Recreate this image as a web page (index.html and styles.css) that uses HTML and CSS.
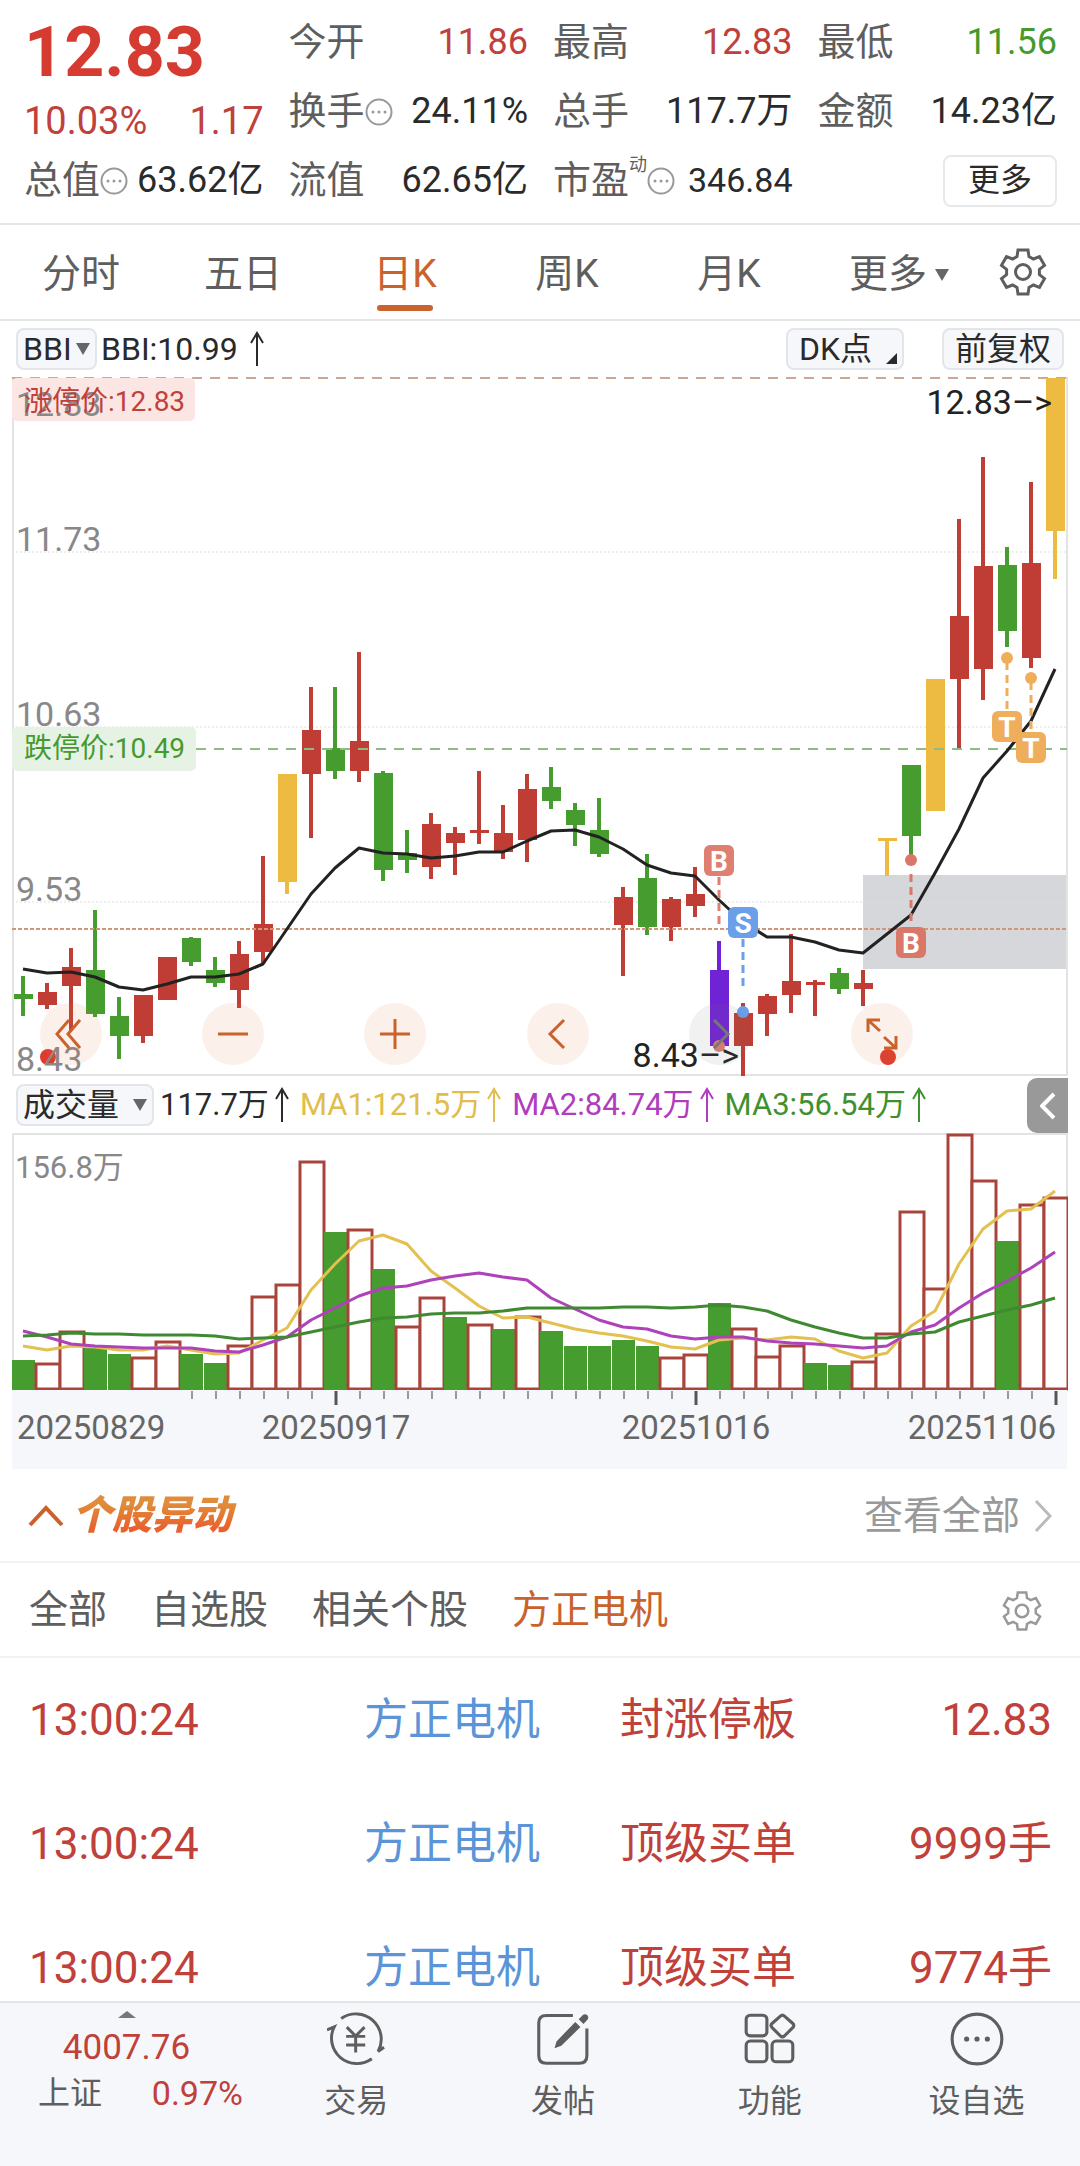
FILE: index.html
```
<!DOCTYPE html>
<html lang="zh-CN">

<head>
    <meta charset="utf-8">
    <meta name="viewport" content="width=device-width, initial-scale=1">
    <title>方正电机 - 日K</title>
    <link rel="stylesheet" href="styles.css">
</head>

<body>
    <svg class="defs" aria-hidden="true">
        <symbol id="gear" viewBox="-25 -25 50 50">
            <path d="M-6-15.5L-5-22H5L6-15.5L10.4-13L16.5-15.3L21.5-6.7L16.4-2.6V2.6L21.5 6.7L16.5 15.3L10.4 13L6 15.5L5 22H-5L-6 15.5L-10.4 13L-16.5 15.3L-21.5 6.7L-16.4 2.6V-2.6L-21.5-6.7L-16.5-15.3L-10.4-13Z" />
            <circle r="7.5" />
        </symbol>
        <symbol id="info" viewBox="0 0 28 28">
            <circle cx="14" cy="14" r="12.5" />
            <path d="M8 14h0M14 14h0M20 14h0" stroke-width="3" stroke-linecap="round" />
        </symbol>
    </svg>

    <main class="content">
        <header class="quote">
            <div class="price">
                <strong class="price-now">12.83</strong>
                <div class="price-change"><span>10.03%</span><span>1.17</span></div>
            </div>
            <div class="cell"><span class="label">今开</span><span class="value up">11.86</span></div>
            <div class="cell"><span class="label">最高</span><span class="value up">12.83</span></div>
            <div class="cell"><span class="label">最低</span><span class="value down">11.56</span></div>
            <div class="cell"><span class="label">换手<svg class="info"><use href="#info" /></svg></span><span class="value">24.11%</span></div>
            <div class="cell"><span class="label">总手</span><span class="value">117.7万</span></div>
            <div class="cell"><span class="label">金额</span><span class="value">14.23亿</span></div>
            <div class="cell"><span class="label">总值<svg class="info"><use href="#info" /></svg></span><span class="value">63.62亿</span></div>
            <div class="cell"><span class="label">流值</span><span class="value">62.65亿</span></div>
            <div class="cell"><span class="label">市盈<sup class="dynamic">动</sup><svg class="info"><use href="#info" /></svg></span><span class="value small">346.84</span></div>
            <div class="cell last"><button class="more">更多</button></div>
        </header>

        <nav class="periods">
            <button class="period">分时</button>
            <button class="period">五日</button>
            <button class="period active">日K</button>
            <button class="period">周K</button>
            <button class="period">月K</button>
            <button class="period menu">更多<i class="triangle"></i></button>
            <button class="settings" aria-label="设置"><svg class="gear"><use href="#gear" /></svg></button>
        </nav>

        <section class="charts">
            <div class="bar">
                <label class="picker"><select class="select" aria-label="主图指标"><option>BBI</option></select><i class="triangle"></i></label>
                <span class="reading">BBI:10.99</span>
                <svg class="arrow" viewBox="0 0 14 36"><path d="M7 35V3M1 12L7 2L13 12" /></svg>
                <label class="picker dk"><select class="select" aria-label="DK点"><option>DK点</option></select><i class="corner"></i></label>
                <button class="adjust">前复权</button>
            </div>

            <div class="kline">
                <svg class="plot" id="kline" viewBox="0 0 1056 700" role="img" aria-label="日K线"></svg>
                <div class="tools">
                    <button class="tool" aria-label="最早"><svg viewBox="0 0 32 32"><path d="M14 2L2 16L14 30M25 2L13 16L25 30" /></svg></button>
                    <button class="tool" aria-label="缩小"><svg viewBox="0 0 32 32"><path d="M1 16H31" /></svg></button>
                    <button class="tool" aria-label="放大"><svg viewBox="0 0 32 32"><path d="M1 16H31M16 1V31" /></svg></button>
                    <button class="tool" aria-label="向前"><svg viewBox="0 0 32 32"><path d="M22 2L8 16L22 30" /></svg></button>
                    <button class="tool off" aria-label="向后" disabled><svg viewBox="0 0 32 32"><path d="M10 2L24 16L10 30" /></svg></button>
                    <button class="tool" aria-label="全屏"><svg viewBox="0 0 32 32"><path d="M2 14V2H14M2 2L14 13M30 18V30H18M30 30L18 19" /></svg></button>
                </div>
            </div>

            <div class="bar volume-bar">
                <label class="picker wide"><select class="select" aria-label="副图指标"><option>成交量</option></select><i class="triangle"></i></label>
                <span class="ma">117.7万<svg class="arrow" viewBox="0 0 14 36"><path d="M7 35V3M1 12L7 2L13 12" /></svg></span>
                <span class="ma ma1">MA1:121.5万<svg class="arrow" viewBox="0 0 14 36"><path d="M7 35V3M1 12L7 2L13 12" /></svg></span>
                <span class="ma ma2">MA2:84.74万<svg class="arrow" viewBox="0 0 14 36"><path d="M7 35V3M1 12L7 2L13 12" /></svg></span>
                <span class="ma ma3">MA3:56.54万<svg class="arrow" viewBox="0 0 14 36"><path d="M7 35V3M1 12L7 2L13 12" /></svg></span>
                <button class="pull" aria-label="展开"><svg viewBox="0 0 16 28"><path d="M14 2L2 14L14 26" /></svg></button>
            </div>

            <svg class="plot" id="volume" viewBox="0 0 1056 336" role="img" aria-label="成交量"></svg>
        </section>

        <section class="moves">
            <div class="moves-head">
                <button class="fold" aria-label="收起"><svg viewBox="0 0 36 22"><path d="M2 20L18 3L34 20" /></svg></button>
                <h2 class="moves-title">个股异动</h2>
                <a class="all" href="#">查看全部<svg viewBox="0 0 18 32"><path d="M2 1L16 16L2 31" /></svg></a>
            </div>
            <div class="filters">
                <button class="filter">全部</button>
                <button class="filter">自选股</button>
                <button class="filter">相关个股</button>
                <button class="filter active">方正电机</button>
                <button class="settings" aria-label="异动设置"><svg class="gear"><use href="#gear" /></svg></button>
            </div>
            <table class="list">
                <tbody>
                    <tr><td>13:00:24</td><td><a href="#">方正电机</a></td><td>封涨停板</td><td>12.83</td></tr>
                    <tr><td>13:00:24</td><td><a href="#">方正电机</a></td><td>顶级买单</td><td>9999手</td></tr>
                    <tr><td>13:00:24</td><td><a href="#">方正电机</a></td><td>顶级买单</td><td>9774手</td></tr>
                </tbody>
            </table>
        </section>
    </main>

    <nav class="bottom">
        <button class="index">
            <i class="triangle"></i>
            <span class="index-value">4007.76</span>
            <span class="index-row"><span>上证</span><span class="index-pct">0.97%</span></span>
        </button>
        <button class="action">
            <svg viewBox="50 42 176 176"><g stroke-width="9"><path d="M93 68A77 77 0 0 1 205 168L223 155M186 190A77 77 0 0 1 72 93L50 102M110 94L137 121L164 94M137 121V171M108 122H166M108 148H166" /></g></svg>
            交易
        </button>
        <button class="action">
            <svg viewBox="672 44 170 170"><g stroke-width="9"><path d="M786 60H708Q686 60 686 82V178Q686 200 708 200H805Q827 200 827 178V98" /></g><path class="solid" d="M732 156L738 136L793 79L808 94L752 149ZM803 71L816 58Q823 54 829 60Q833 66 829 72L817 85Z" /></svg>
            发帖
        </button>
        <button class="action">
            <svg viewBox="-4 -4 56 56"><rect x="1" y="1" width="20" height="20" rx="4" /><rect x="1" y="26" width="20" height="20" rx="4" /><rect x="26" y="26" width="20" height="20" rx="4" /><path d="M34 2Q36 0 38 2L46 9Q48 11 46 13L38 21Q36 23 34 21L26 13Q24 11 26 9Z" /></svg>
            功能
        </button>
        <button class="action">
            <svg viewBox="-1 -1 56 56"><circle cx="27" cy="27" r="24" /><path d="M17 27h0M27 27h0M37 27h0" stroke-width="5" stroke-linecap="round" /></svg>
            设自选
        </button>
    </nav>

    <script src="chart.js"></script>
</body>

</html>
```

FILE: styles.css
```
* {
    box-sizing: border-box;
}

body {
    margin: 0;
    height: 100vh;
    display: flex;
    flex-direction: column;
    background-color: #fff;
    color: #2a2a2a;
    font-family: Roboto, "Noto Sans CJK SC", sans-serif;
    line-height: 1.2;
}

button,
select {
    margin: 0;
    padding: 0;
    border: none;
    background: none;
    color: inherit;
    font: inherit;
    cursor: pointer;
}

a {
    color: inherit;
    text-decoration: none;
}

svg {
    display: block;
    fill: none;
    stroke: currentColor;
    stroke-width: 3;
}

.defs {
    position: absolute;
    width: 0;
    height: 0;
}

.content {
    flex: 1;
    min-height: 0;
    overflow-x: hidden;
    overflow-y: auto;
    scrollbar-width: none;
}

/* Quote header */
.quote {
    display: grid;
    grid-template-columns: repeat(4, minmax(0, 1fr));
    grid-auto-rows: 69px;
    column-gap: 25px;
    padding: 8px 23px 8px 24px;
    border-bottom: 2px solid #e6e6e8;
}

.price {
    grid-row: span 2;
    color: #d63b31;
}

.price-now {
    display: block;
    font-size: 70px;
    font-weight: 700;
    line-height: 88px;
}

.price-change {
    display: flex;
    justify-content: space-between;
    color: #c0403a;
    font-size: 38px;
    line-height: 50px;
}

.cell {
    display: flex;
    align-items: center;
    justify-content: space-between;
    white-space: nowrap;
}

.cell.last {
    justify-content: flex-end;
}

.label {
    display: flex;
    align-items: center;
    color: #5e5e5e;
    font-size: 38px;
}

.value {
    font-size: 36px;
}

.value.small {
    font-size: 34px;
}

.up {
    color: #c0403a;
}

.down {
    color: #459a2e;
}

.info {
    width: 28px;
    height: 28px;
    color: #999;
    stroke-width: 2;
}

.dynamic {
    align-self: flex-start;
    font-size: 18px;
    line-height: 14px;
}

.more {
    width: 114px;
    height: 52px;
    border: 2px solid #e6e8ec;
    border-radius: 8px;
    font-size: 32px;
}

/* Period tabs */
.periods {
    display: grid;
    grid-template-columns: repeat(6, 3fr) 2fr;
    height: 96px;
    border-bottom: 2px solid #e6e6e8;
    color: #5e5e5e;
    font-size: 39px;
}

.period {
    display: flex;
    align-items: center;
    justify-content: center;
    padding-top: 5px;
    position: relative;
}

.period.menu {
    padding-left: 16px;
}

.period.active {
    color: #c9622d;
}

.period.active::after {
    content: "";
    position: absolute;
    bottom: 8px;
    width: 56px;
    height: 6px;
    border-radius: 3px;
    background-color: #c9622d;
}

.period .triangle {
    margin-left: 8px;
}

.triangle {
    border: 7px solid transparent;
    border-top: 12px solid #666;
    border-bottom: none;
}

.periods .settings {
    padding-right: 6px;
}

.gear {
    width: 50px;
    height: 50px;
    margin: auto;
}

/* Indicator bars */
.charts {
    padding: 0 12px;
}

.bar {
    display: flex;
    align-items: center;
    gap: 4px;
    height: 56px;
    padding: 0 4px;
    font-size: 32px;
    white-space: nowrap;
}

.picker,
.adjust {
    display: flex;
    align-items: center;
    justify-content: space-between;
    height: 42px;
    padding: 0 5px;
    border: 2px solid #e2e5ea;
    border-radius: 8px;
    background-color: #f6f7fa;
}

.picker {
    gap: 4px;
}

.select {
    appearance: none;
    line-height: 38px;
}

.dk {
    width: 118px;
    margin-left: auto;
    margin-right: 34px;
    padding-left: 11px;
}

.corner {
    align-self: flex-end;
    margin-bottom: 4px;
    border-left: 11px solid transparent;
    border-bottom: 11px solid #2a2a2a;
}

.adjust {
    padding: 0 11px;
}

.arrow {
    width: 14px;
    height: 36px;
    margin-left: 8px;
    stroke-width: 2;
}

.kline {
    position: relative;
}

.plot {
    width: 100%;
    height: auto;
}

.plot text {
    font-size: 34px;
    fill: #888;
    stroke: none;
}

.plot .dark {
    fill: #222;
}

.plot .mid {
    font-size: 31px;
}

.plot .date {
    font-size: 33px;
    fill: #666;
}

.plot .tag {
    font-size: 28px;
}

.plot .badge {
    font-size: 28px;
    font-weight: 700;
    fill: #fff;
}

.tools {
    position: absolute;
    left: 28px;
    right: 155px;
    bottom: 12px;
    display: flex;
    justify-content: space-between;
}

.tool {
    width: 62px;
    height: 62px;
    border-radius: 50%;
    background-color: rgba(230, 120, 70, 0.11);
    color: #c9622d;
}

.tool svg {
    width: 32px;
    height: 32px;
    margin: auto;
}

.tool.off {
    background-color: rgba(120, 120, 120, 0.1);
    color: #777;
}

.volume-bar {
    position: relative;
    gap: 6px;
    font-size: 31px;
}

.wide {
    width: 138px;
    font-size: 32px;
}

.ma {
    display: flex;
    align-items: center;
    margin-right: 5px;
}

.ma .arrow {
    margin-left: 6px;
}

.ma1 {
    color: #e0bd4c;
}

.ma2 {
    color: #b03cc0;
}

.ma3 {
    color: #3f9130;
}

.pull {
    position: absolute;
    right: 0;
    top: 1px;
    width: 41px;
    height: 55px;
    border-radius: 10px 0 0 10px;
    background-color: #999;
    color: #fff;
}

.pull svg {
    width: 16px;
    height: 28px;
    margin: auto;
    stroke-width: 4;
}

/* Stock movements */
.moves-head {
    display: flex;
    align-items: center;
    height: 94px;
    padding: 2px 28px 0;
    border-bottom: 2px solid #f2f2f4;
}

.fold {
    color: #c9622d;
}

.fold svg {
    width: 36px;
    height: 22px;
    stroke-width: 4;
}

.moves-title {
    margin: 0 0 0 8px;
    padding-right: 6px;
    background: linear-gradient(#e08c3a 25%, #e9622e 75%);
    background-clip: text;
    color: transparent;
    font-size: 40px;
    font-style: italic;
    font-weight: 900;
}

.all {
    display: flex;
    align-items: center;
    gap: 14px;
    margin-left: auto;
    color: #999;
    font-size: 39px;
}

.all svg {
    width: 18px;
    height: 32px;
    color: #bbb;
}

.filters {
    display: flex;
    align-items: center;
    gap: 44px;
    height: 95px;
    padding: 2px 37px 0 29px;
    border-bottom: 2px solid #f2f2f4;
    color: #5e5e5e;
    font-size: 39px;
}

.filter.active {
    color: #c9622d;
}

.filters .settings {
    margin-left: auto;
    color: #999;
}

.filters .gear {
    width: 42px;
    height: 42px;
}

.list {
    width: 100%;
    border-collapse: collapse;
    table-layout: fixed;
    color: #c0403a;
    font-size: 44px;
}

.list td {
    height: 124px;
    padding: 0;
    white-space: nowrap;
}

.list td:nth-child(1) {
    width: 364px;
    padding-left: 29px;
}

.list td:nth-child(2) {
    width: 256px;
    color: #5b95d8;
}

.list td:nth-child(4) {
    padding-right: 28px;
    text-align: right;
}

/* Bottom navigation */
.bottom {
    display: flex;
    height: 165px;
    border-top: 2px solid #e2e4e8;
    background-color: #f6f7fa;
    color: #5e5e5e;
    font-size: 32px;
}

.index {
    width: 253px;
    display: flex;
    flex-direction: column;
    align-items: center;
    padding-top: 8px;
}

.index .triangle {
    border: 9px solid transparent;
    border-bottom: 7px solid #777;
    border-top: none;
}

.index-value {
    margin-top: 8px;
    color: #c0403a;
    font-size: 35px;
    line-height: 44px;
}

.index-row {
    align-self: stretch;
    display: flex;
    justify-content: space-between;
    padding: 0 10px 0 38px;
    line-height: 46px;
}

.index-pct {
    color: #c0403a;
    font-size: 34px;
}

.action {
    flex: 1;
    display: flex;
    flex-direction: column;
    align-items: center;
    gap: 14px;
    padding-top: 7px;
}

.action svg {
    width: 58px;
    height: 58px;
}

.action .solid {
    fill: currentColor;
    stroke: none;
}
```

FILE: chart.js
```
var STEP = 24;
var COLORS = { r: '#bf3d34', g: '#469c2e', y: '#edbb41', p: '#7023d4' };

// [color, high, body top, body bottom, low]
var candles = [
    ['g', 599, 617, 622, 639], ['r', 606, 615, 628, 632], ['r', 571, 590, 609, 654],
    ['g', 533, 593, 637, 640], ['g', 620, 639, 659, 682], ['r', 618, 618, 659, 666],
    ['r', 580, 580, 623, 623], ['g', 560, 561, 585, 589], ['g', 580, 593, 606, 610],
    ['r', 564, 577, 613, 631], ['r', 479, 547, 575, 587], ['y', 397, 397, 505, 517],
    ['r', 310, 353, 397, 461], ['g', 310, 371, 394, 402], ['r', 275, 364, 394, 405],
    ['g', 394, 396, 493, 504], ['g', 453, 476, 483, 496], ['r', 436, 447, 490, 502],
    ['r', 450, 456, 466, 498], ['r', 394, 453, 456, 467], ['r', 428, 456, 475, 482],
    ['r', 397, 412, 463, 485], ['g', 390, 410, 424, 432], ['g', 426, 433, 448, 469],
    ['g', 421, 453, 477, 480], ['r', 510, 520, 548, 599], ['g', 477, 501, 550, 558],
    ['r', 520, 522, 550, 564], ['r', 490, 517, 529, 540], ['p', 564, 593, 669, 669],
    ['r', 626, 636, 669, 699], ['r', 617, 619, 637, 659], ['r', 557, 604, 618, 636],
    ['r', 603, 605, 608, 639], ['g', 591, 596, 612, 617], ['r', 593, 606, 612, 629],
    ['y', 461, 461, 464, 499], ['g', 388, 388, 459, 484], ['y', 302, 302, 434, 434],
    ['r', 142, 239, 302, 371], ['r', 80, 189, 292, 323], ['g', 170, 188, 254, 270],
    ['r', 105, 186, 281, 291], ['y', 1, 1, 154, 202]
];

var bbi = [592, 596, 595, 600, 610, 613, 607, 600, 600, 597, 587, 552, 517, 491, 471, 476, 477, 481, 479,
    475, 475, 464, 454, 453, 460, 472, 488, 496, 499, 523, 545, 560, 560, 565, 573, 576, 557, 538, 496,
    452, 401, 374, 344, 292];

// [color, bar top]
var volumes = [
    ['g', 227], ['r', 230], ['r', 198], ['g', 215], ['g', 221], ['r', 224], ['r', 208], ['g', 221],
    ['g', 230], ['r', 212], ['r', 163], ['r', 151], ['r', 28], ['g', 99], ['r', 96], ['g', 136],
    ['r', 193], ['r', 164], ['g', 184], ['r', 191], ['g', 196], ['r', 183], ['g', 198], ['g', 213],
    ['g', 213], ['g', 207], ['g', 213], ['r', 224], ['r', 221], ['g', 170], ['r', 195], ['r', 223],
    ['r', 212], ['g', 230], ['g', 232], ['r', 228], ['r', 200], ['r', 78], ['r', 155], ['r', 1],
    ['r', 47], ['g', 108], ['r', 71], ['r', 64]
];

var ma1 = [213, 217, 213, 214, 217, 217, 213, 217, 221, 220, 207, 195, 157, 131, 108, 102, 111, 138, 155,
    173, 185, 184, 190, 196, 200, 203, 208, 214, 216, 207, 205, 207, 204, 206, 218, 225, 220, 193, 178,
    131, 96, 78, 76, 58];
var ma2 = [198, 204, 211, 213, 214, 215, 215, 215, 218, 219, 212, 204, 187, 175, 163, 155, 153, 147, 143,
    140, 144, 147, 165, 176, 187, 194, 196, 203, 206, 204, 204, 208, 210, 211, 213, 215, 213, 199, 192,
    175, 160, 148, 135, 119];
var ma3 = [203, 202, 200, 201, 201, 202, 202, 202, 203, 206, 205, 204, 199, 194, 189, 185, 184, 181, 180,
    180, 178, 175, 175, 175, 175, 174, 174, 175, 174, 172, 174, 178, 187, 194, 200, 205, 205, 201, 199,
    189, 183, 177, 172, 165];

function centerX(i) {
    return 11 + i * STEP;
}

function rect(x, y, w, h, fill, extra) {
    return '<rect x="' + x + '" y="' + y + '" width="' + w + '" height="' + h + '" fill="' + fill + '" stroke="none" ' + (extra || '') + '/>';
}

function line(x1, y1, x2, y2, color, width, dash) {
    return '<path d="M' + x1 + ' ' + y1 + 'L' + x2 + ' ' + y2 + '" stroke="' + color + '" stroke-width="' + width + '"' +
        (dash ? ' stroke-dasharray="' + dash + '"' : '') + '/>';
}

function text(x, y, str, cls, anchor, fill) {
    return '<text x="' + x + '" y="' + y + '" class="' + (cls || '') + '" text-anchor="' + (anchor || 'start') + '"' +
        (fill ? ' style="fill:' + fill + '"' : '') + '>' + str + '</text>';
}

function curve(points, color, width) {
    var d = points.map(function (y, i) {
        return centerX(i) + ' ' + y;
    }).join('L');
    return '<path d="M' + d + '" stroke="' + color + '" stroke-width="' + width + '" stroke-linejoin="round"/>';
}

function dot(x, y, r, color) {
    return '<circle cx="' + x + '" cy="' + y + '" r="' + r + '" fill="' + color + '" stroke="none"/>';
}

// Trade signal: letter badge, dashed stem and a dot on the candle
function signal(i, letter, color, top, from, to, dotY) {
    var x = centerX(i);
    return line(x, from, x, to, color, 3, '8 5') + dot(x, dotY, 6, color) +
        rect(x - 15, top, 30, 31, color, 'rx="6"') + text(x, top + 26, letter, 'badge', 'middle');
}

function drawKline() {
    var out = rect(851, 498, 204, 94, '#d6d7db');

    [175, 350, 525].forEach(function (y) {
        out += line(0, y, 1055, y, '#ddd', 1, '2 2');
    });
    out += '<path d="M1 0V698H1055V0" stroke="#e3e3e5" stroke-width="2"/>';
    out += line(0, 1, 1055, 1, '#c9a898', 2, '10 8');

    candles.forEach(function (c, i) {
        var x = centerX(i);
        out += line(x, c[1], x, c[4], COLORS[c[0]], 4);
        out += rect(x - 9, c[2], 19, c[3] - c[2], COLORS[c[0]]);
    });
    out += line(184, 372, 1055, 372, '#8fbb86', 2, '10 8');
    out += line(0, 552, 1055, 552, '#cf9778', 2, '4 2');
    out += curve(bbi, '#222', 3);

    out += signal(29, 'B', '#df7f71', 468, 500, 552, 669);
    out += signal(30, 'S', '#6c9fea', 530, 562, 614, 635);
    out += signal(37, 'B', '#d97769', 550, 497, 549, 483);
    out += signal(41, 'T', '#efae5c', 334, 285, 333, 281);
    out += signal(42, 'T', '#efae5c', 355, 305, 354, 301);

    out += dot(36, 680, 8, '#dd3b2e') + dot(876, 680, 8, '#dd3b2e');
    out += rect(0, 1, 183, 43, '#fbe6e3', 'rx="5"');
    out += rect(0, 350, 184, 44, '#e6f3e4', 'rx="5"');
    out += text(4, 39, '12.83') + text(4, 174, '11.73') + text(4, 349, '10.63');
    out += text(4, 524, '9.53') + text(4, 694, '8.43');
    out += text(12, 34, '涨停价:12.83', 'tag', 'start', '#c0403a');
    out += text(12, 381, '跌停价:10.49', 'tag', 'start', '#459a2e');
    out += text(1040, 37, '12.83–&gt;', 'dark', 'end');
    out += text(727, 690, '8.43–&gt;', 'dark', 'end');
    document.getElementById('kline').innerHTML = out;
}

function drawVolume() {
    var base = 256;
    var out = '<path d="M1 257V1H1055V257" stroke="#e3e3e5" stroke-width="2"/>';
    out += text(3, 45, '156.8万', 'mid');

    volumes.forEach(function (v, i) {
        var x = centerX(i);
        if (v[0] === 'g') {
            out += rect(x - 11, v[1], 23, base - v[1] + 1, COLORS.g);
        } else {
            out += '<rect x="' + (x - 11) + '" y="' + (v[1] + 1) + '" width="24" height="' + (base - v[1] - 1) +
                '" fill="#fff" stroke="#a9443d" stroke-width="3"/>';
        }
    });
    out += curve(ma1, '#e3c050', 3) + curve(ma2, '#ad42ba', 3) + curve(ma3, '#3f8a31', 3);

    out += rect(0, 257, 1055, 79, '#f6f7fa');
    for (var i = 7; i < volumes.length; i++) {
        var major = i === 13 || i === 28 || i === 43;
        out += line(centerX(i) + 1, 258, centerX(i) + 1, major ? 272 : 266, major ? '#555' : '#999', major ? 3 : 2);
    }
    out += text(5, 306, '20250829', 'date') + text(324, 306, '20250917', 'date', 'middle');
    out += text(684, 306, '20251016', 'date', 'middle') + text(1044, 306, '20251106', 'date', 'end');
    document.getElementById('volume').innerHTML = out;
}

drawKline();
drawVolume();
```
